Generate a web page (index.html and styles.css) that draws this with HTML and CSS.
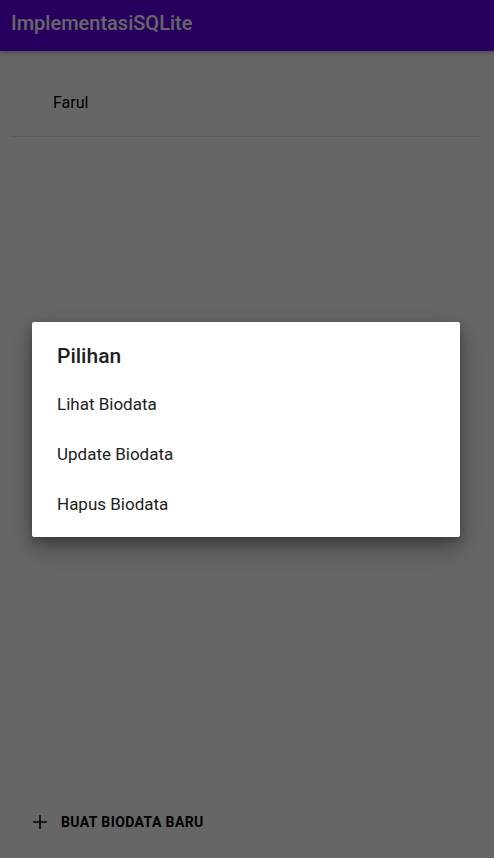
FILE: index.html
```html
<!DOCTYPE html>
<html>
<head>
<meta charset="utf-8">
<link rel="stylesheet" href="styles.css">
</head>
<body>
<div class="app">
  <header class="appbar">ImplementasiSQLite</header>
  <main class="list">
    <div class="item">Farul</div>
    <div class="divider"></div>
  </main>
  <div class="bottom">
    <button class="add-btn">
      <svg class="plus" width="16" height="16" viewBox="0 0 16 16"><path d="M8 1v14M1 8h14" stroke="#111" stroke-width="1.6" fill="none"/></svg>
      <span>BUAT BIODATA BARU</span>
    </button>
  </div>
</div>
<div class="scrim">
  <div class="dialog">
    <div class="dialog-title">Pilihan</div>
    <div class="option">Lihat Biodata</div>
    <div class="option">Update Biodata</div>
    <div class="option">Hapus Biodata</div>
  </div>
</div>
</body>
</html>
```
FILE: styles.css
```css
html, body {
  margin: 0;
  padding: 0;
}
body {
  width: 494px;
  height: 858px;
  overflow: hidden;
  position: relative;
  font-family: Roboto, "Noto Sans", sans-serif;
  background: #fff;
}
.app {
  display: flex;
  flex-direction: column;
  height: 858px;
}
.appbar {
  height: 51px;
  background: #6200ee;
  color: #fff;
  font-size: 20px;
  font-weight: 500;
  padding-left: 11px;
  display: flex;
  align-items: center;
  padding-bottom: 5px;
  box-sizing: border-box;
  box-shadow: 0 2px 4px rgba(0,0,0,0.25);
  position: relative;
  z-index: 1;
}
.list {
  flex: 1;
}
.item {
  height: 85px;
  padding: 42px 0 0 53px;
  line-height: 20px;
  font-size: 16px;
  color: #000;
  box-sizing: border-box;
}
.divider {
  height: 1px;
  background: #e4e4e4;
  margin: 0 13px 0 11px;
}
.bottom {
  height: 72px;
  display: flex;
  align-items: center;
  padding-left: 32px;
}
.add-btn {
  display: flex;
  align-items: center;
  gap: 13px;
  background: none;
  border: none;
  padding: 0;
  font-family: Roboto, "Noto Sans", sans-serif;
  font-size: 14px;
  font-weight: 700;
  color: #000;
  letter-spacing: 0.4px;
}
.plus {
  display: block;
}
.scrim {
  position: absolute;
  inset: 0;
  background: rgba(0,0,0,0.6);
  display: flex;
  align-items: center;
  justify-content: center;
  z-index: 5;
}
.dialog {
  width: 428px;
  height: 215px;
  background: #fff;
  border-radius: 2px;
  box-shadow: 0 10px 24px rgba(0,0,0,0.35), 0 4px 8px rgba(0,0,0,0.2);
  box-sizing: border-box;
  padding: 18px 25px 8px;
  margin-left: -2px;
}
.dialog-title {
  font-size: 21px;
  font-weight: 500;
  color: #212121;
  height: 32px;
  display: flex;
  align-items: center;
  margin-bottom: 7px;
}
.option {
  height: 50px;
  display: flex;
  align-items: center;
  font-size: 17px;
  color: #212121;
}
```
